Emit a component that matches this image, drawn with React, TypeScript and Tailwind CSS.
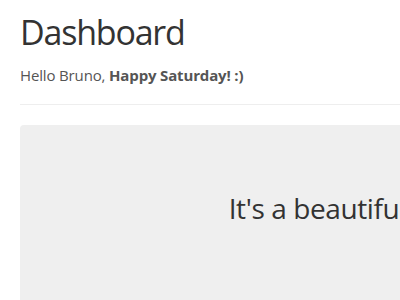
export default function App() {
  return (
    <div className="h-[300px] w-[400px] overflow-hidden bg-white font-['Open_Sans',sans-serif]">
      <div className="w-[694px] px-5 pt-[10px]">
        <h1 className="text-[34px] leading-[44px] tracking-[-1.2px] text-[#333333]">Dashboard</h1>
        <p className="mt-[11px] text-[15px] leading-[20px] tracking-[-0.15px] text-[#555555]">
          Hello Bruno, <span className="font-bold">Happy Saturday! :)</span>
        </p>
        <div className="mt-[19px] h-px bg-[#eeeeee]" />
        <div className="mt-5 h-[300px] rounded bg-[#efefef] pt-[63px] text-center">
          <p className="text-[28px] leading-[40px] tracking-[-0.4px] text-[#333333]">It's a beautiful day!</p>
        </div>
      </div>
    </div>
  );
}
